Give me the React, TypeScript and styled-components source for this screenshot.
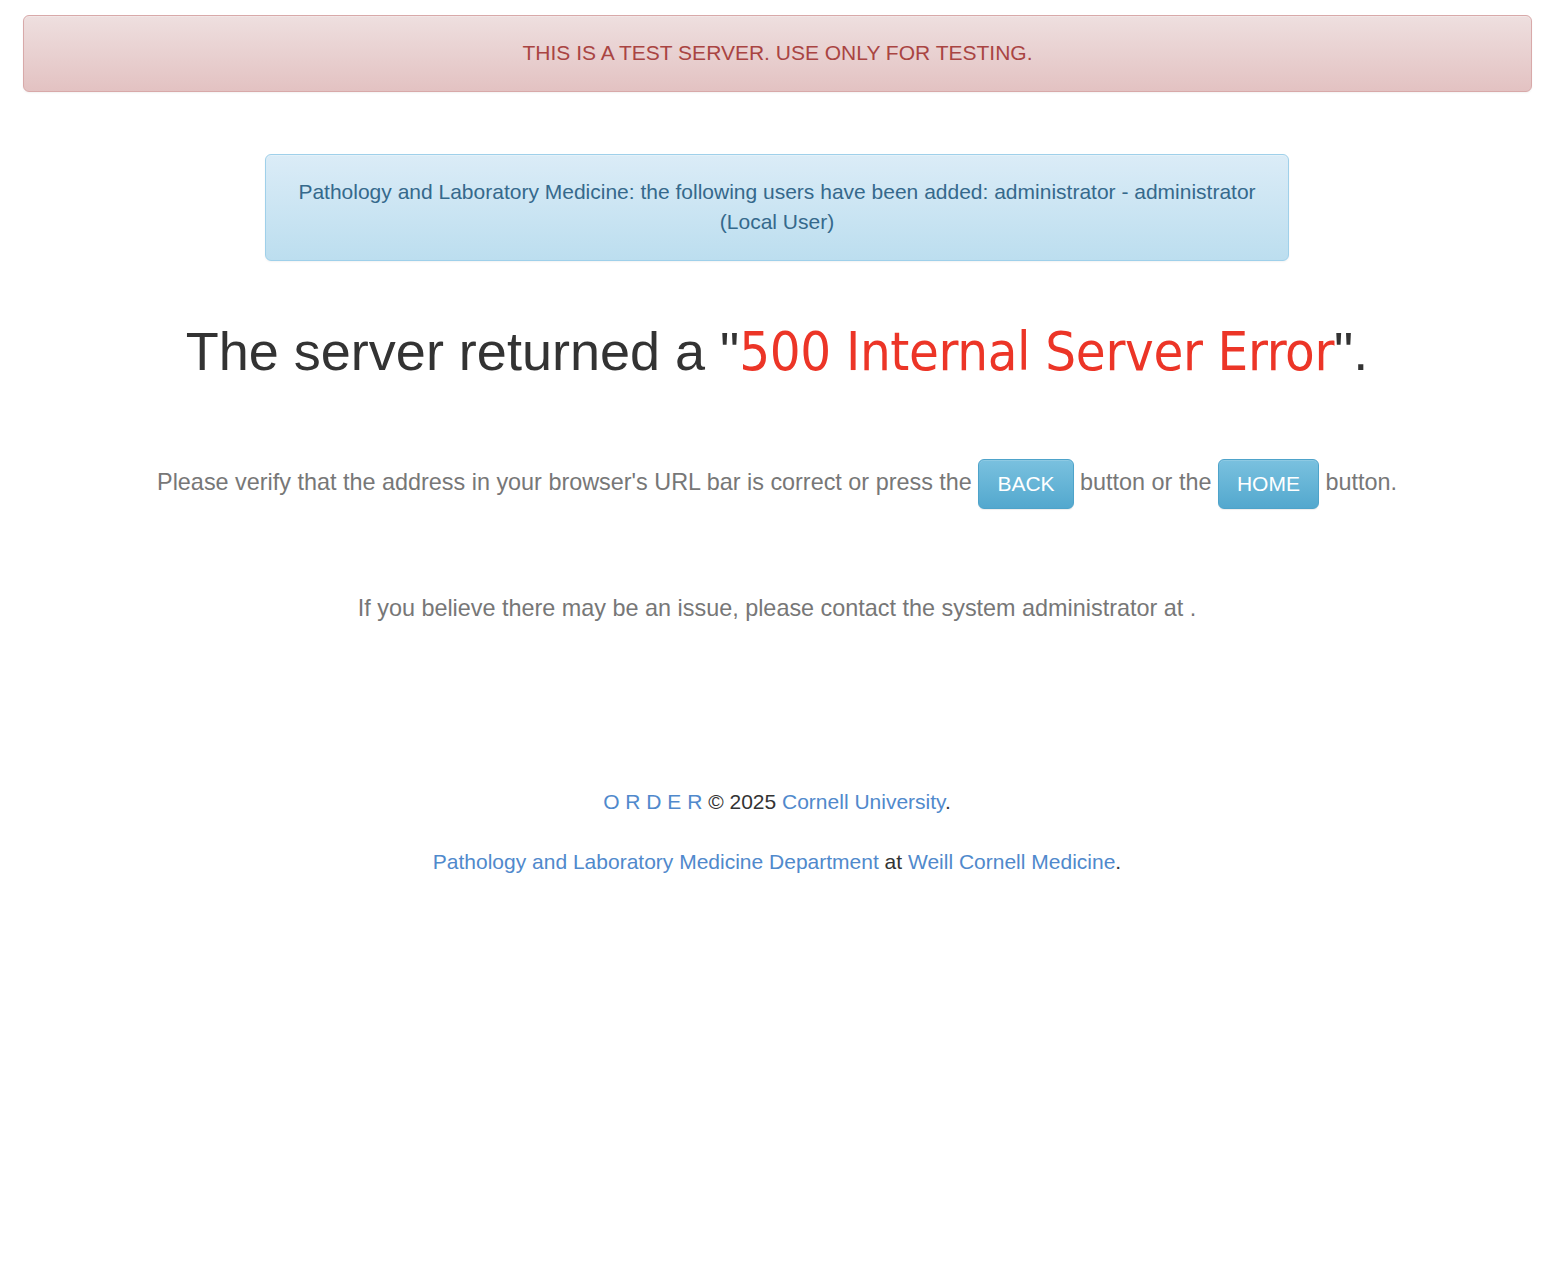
import React from 'react';
import styled, { createGlobalStyle } from 'styled-components';

const GlobalStyle = createGlobalStyle`
  html, body {
    margin: 0;
    padding: 0;
    background: #fff;
  }
  body {
    font-family: "Liberation Sans", Arial, Helvetica, sans-serif;
    font-size: 21px;
    line-height: 30px;
    color: #333;
  }
`;

const Page = styled.div`
  padding: 15px 23px 0;
`;

const Alert = styled.div<{ $tone: 'danger' | 'info' }>`
  box-sizing: border-box;
  text-align: center;
  border-radius: 6px;
  border: 1px solid ${(p) => (p.$tone === 'danger' ? '#d8a9a9' : '#9fd0ea')};
  color: ${(p) => (p.$tone === 'danger' ? '#a94442' : '#35698c')};
  background: ${(p) =>
    p.$tone === 'danger'
      ? 'linear-gradient(to bottom, #eedfdf 0%, #e3c2c2 100%)'
      : 'linear-gradient(to bottom, #dbecf7 0%, #bcdeef 100%)'};
  box-shadow: 0 1px 0 rgba(255, 255, 255, 0.25) inset, 0 1px 2px rgba(0, 0, 0, 0.05);
`;

const TestBanner = styled(Alert)`
  margin-right: -1px;
  padding: 22px 15px 23px;
`;

const Notice = styled(Alert)`
  width: 1024px;
  margin: 62px auto 0;
  padding: 22px 30px 23px;
`;

const Heading = styled.h1`
  margin: 60px 0 0;
  font-size: 54px;
  line-height: 60px;
  font-weight: 400;
  text-align: center;
  color: #333;
`;

const ErrorCode = styled.span`
  color: #ec3527;
  font-family: "DejaVu Sans Condensed", "DejaVu Sans", sans-serif;
  letter-spacing: -0.35px;
`;

const Text = styled.p<{ $top: number }>`
  margin: ${(p) => p.$top}px 0 0;
  font-size: 23.4px;
  line-height: 30px;
  text-align: center;
  color: #777;
`;

const Button = styled.a`
  display: inline-block;
  vertical-align: middle;
  padding: 9px 18px;
  font-size: 21px;
  line-height: 30px;
  color: #fff;
  border: 1px solid #4ea3ca;
  border-radius: 6px;
  background: linear-gradient(to bottom, #7ac1df 0%, #53a8ce 100%);
  box-shadow: inset 0 1px 0 rgba(255, 255, 255, 0.15), 0 1px 1px rgba(0, 0, 0, 0.075);
  text-decoration: none;
  cursor: pointer;
`;

const Footer = styled.footer`
  margin-top: 164px;
  text-align: center;
  color: #333;
`;

const FooterLine = styled.p`
  margin: 0 0 30px;
`;

const Link = styled.a`
  color: #5089cc;
  text-decoration: none;
`;

export default function App() {
  return (
    <>
      <GlobalStyle />
      <Page>
        <TestBanner $tone="danger">THIS IS A TEST SERVER. USE ONLY FOR TESTING.</TestBanner>
        <Notice $tone="info">
          Pathology and Laboratory Medicine: the following users have been added: administrator - administrator
          (Local User)
        </Notice>
        <Heading>
          The server returned a "<ErrorCode>500 Internal Server Error</ErrorCode>".
        </Heading>
        <Text $top={77}>
          Please verify that the address in your browser's URL bar is correct or press the{' '}
          <Button href="#">BACK</Button> button or the <Button href="#">HOME</Button> button.
        </Text>
        <Text $top={84}>If you believe there may be an issue, please contact the system administrator at .</Text>
        <Footer>
          <FooterLine>
            <Link href="#">O R D E R</Link> © 2025 <Link href="#">Cornell University</Link>.
          </FooterLine>
          <FooterLine>
            <Link href="#">Pathology and Laboratory Medicine Department</Link> at{' '}
            <Link href="#">Weill Cornell Medicine</Link>.
          </FooterLine>
        </Footer>
      </Page>
    </>
  );
}
